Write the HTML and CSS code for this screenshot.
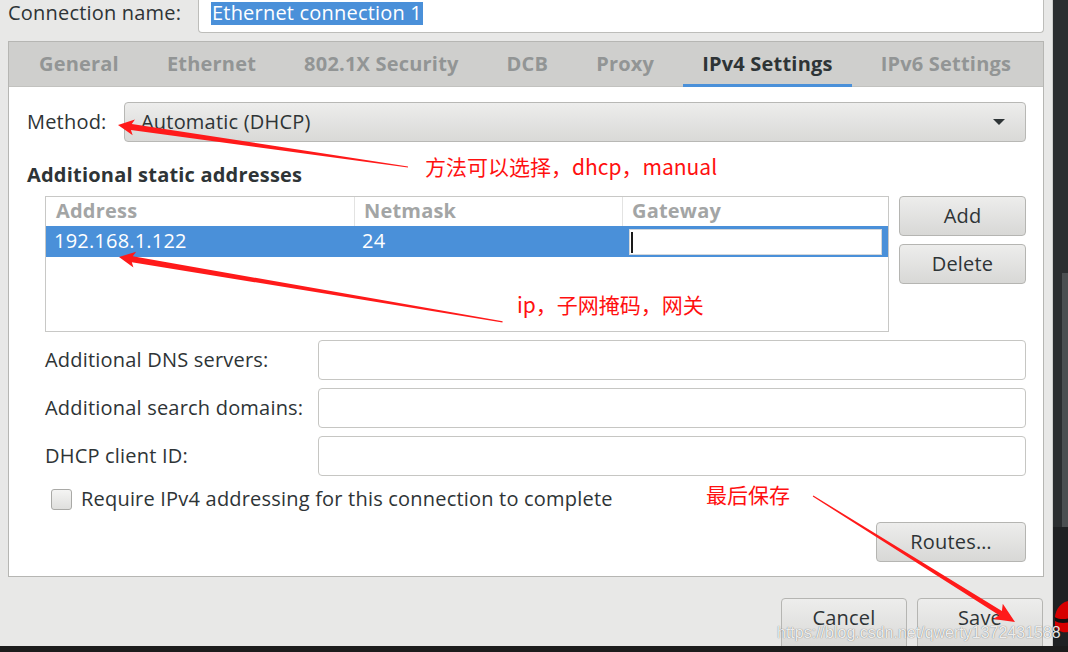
FILE: index.html
```html
<!DOCTYPE html>
<html>
<head>
<meta charset="utf-8">
<title>IPv4 Settings</title>
<link rel="stylesheet" href="styles.css">
</head>
<body>
<div class="screen">
  <div class="main">
    <div class="window">
      <div class="name-row">
        <span class="name-label">Connection name:</span>
        <div class="name-entry"><span class="sel">Ethernet connection 1</span></div>
      </div>
      <div class="notebook">
        <div class="tabs">
          <div class="tab">General</div>
          <div class="tab">Ethernet</div>
          <div class="tab">802.1X Security</div>
          <div class="tab">DCB</div>
          <div class="tab">Proxy</div>
          <div class="tab active">IPv4 Settings</div>
          <div class="tab">IPv6 Settings</div>
        </div>
        <div class="page">
          <div class="method-row">
            <span class="method-lbl">Method:</span>
            <div class="combo"><span>Automatic (DHCP)</span><span class="combo-arrow"></span></div>
          </div>
          <div class="section-title">Additional static addresses</div>
          <div class="addr-row">
            <div class="addr-table">
              <div class="thead">
                <div class="th c1">Address</div>
                <div class="th c2">Netmask</div>
                <div class="th c3">Gateway</div>
              </div>
              <div class="trow selected">
                <div class="td c1">192.168.1.122</div>
                <div class="td c2">24</div>
                <div class="td c3"><div class="cell-entry"><span class="cursor"></span></div></div>
              </div>
            </div>
            <div class="side-buttons">
              <button class="btn">Add</button>
              <button class="btn">Delete</button>
            </div>
          </div>
          <div class="fields">
            <div class="field-row"><span class="field-lbl">Additional DNS servers:</span><div class="entry"></div></div>
            <div class="field-row"><span class="field-lbl">Additional search domains:</span><div class="entry"></div></div>
            <div class="field-row"><span class="field-lbl">DHCP client ID:</span><div class="entry"></div></div>
          </div>
          <div class="check-row"><span class="checkbox"></span><span>Require IPv4 addressing for this connection to complete</span></div>
          <div class="routes-row"><button class="btn routes">Routes…</button></div>
        </div>
      </div>
      <div class="actions">
        <button class="btn action">Cancel</button>
        <button class="btn action">Save</button>
      </div>
    </div>
    <div class="desktop">
      <div class="desk-top"><div class="desk-panel"></div></div>
      <div class="desk-bottom">
        <svg class="redhat" width="15" height="34" viewBox="0 0 15 34">
          <path d="M2 22 C1 12 6 3 15 1 L15 32 C9 33 4 31 2 26 Z" fill="#d60000"/>
          <path d="M1.5 17 C6 19.5 11 19.5 15 18.5 L15 22.5 C10 23.5 5 23 2 21 Z" fill="#111"/>
        </svg>
      </div>
    </div>
  </div>
  <div class="taskbar"></div>

  <svg class="marks" width="1068" height="652" viewBox="0 0 1068 652">
    <g fill="#ff1a1a">
      <g transform="translate(118 125) rotate(8.24)">
        <polygon points="0,0 16,-8 13.5,-3 293,-0.6 293,0.6 13.5,3 16,8"/>
      </g>
      <g transform="translate(119 257) rotate(9.61)">
        <polygon points="0,0 16,-8 13.5,-3 389,-0.6 389,0.6 13.5,3 16,8"/>
      </g>
      <g transform="translate(1015 622) rotate(211.95)">
        <polygon points="0,0 20,-9 17,-2.5 238,-0.6 238,0.6 17,2.5 20,9"/>
      </g>
    </g>
  </svg>
  <div class="note note1">方法可以选择，dhcp，manual</div>
  <div class="note note2">ip，子网掩码，网关</div>
  <div class="note note3">最后保存</div>
  <div class="watermark">https://blog.csdn.net/qwerty1372431588</div>
</div>
</body>
</html>
```

FILE: styles.css
```css
* { box-sizing: border-box; }
html, body { margin: 0; padding: 0; }
body {
  width: 1068px;
  height: 652px;
  overflow: hidden;
  background: #1c1c1c;
  font-family: "Open Sans", "Noto Sans", sans-serif;
  font-size: 20px;
  letter-spacing: 0.2px;
  color: #2e3436;
}
.screen {
  position: relative;
  width: 1068px;
  height: 652px;
  display: flex;
  flex-direction: column;
}
.main {
  display: flex;
  height: 646px;
  overflow: hidden;
}
.window {
  width: 1053px;
  flex: none;
  background: #e8e8e7;
  border-right: 1px solid #cdcdcb;
  display: flex;
  flex-direction: column;
}
.desktop {
  flex: 1;
  display: flex;
  flex-direction: column;
}
.desk-top {
  height: 527px;
  background: #2b2e30;
  display: flex;
  justify-content: flex-end;
  align-items: flex-end;
}
.desk-panel {
  width: 6px;
  height: 254px;
  background: #4b4f51;
}
.desk-bottom {
  flex: 1;
  background: #1f2123;
  position: relative;
}
.redhat {
  position: absolute;
  left: 0;
  top: 73px;
}
.taskbar {
  height: 6px;
  background: #1c1c1c;
}

/* connection name */
.name-row {
  display: flex;
  height: 33px;
  flex: none;
}
.name-label {
  width: 198px;
  padding-left: 8px;
  line-height: 25px;
}
.name-entry {
  width: 846px;
  height: 33px;
  background: #fff;
  border: 1px solid #bdbdba;
  border-top: 0;
  border-radius: 0 0 4px 4px;
  padding: 2px 0 0 12px;
  display: flex;
  align-items: flex-start;
}
.sel {
  display: block;
  background: #4a90d9;
  color: #fff;
  line-height: 21px;
  height: 23px;
  padding: 0 1px;
}

/* notebook */
.notebook {
  margin: 8px 0 0 8px;
  width: 1036px;
  height: 536px;
  flex: none;
  border: 1px solid #b6b6b3;
  background: #fff;
  display: flex;
  flex-direction: column;
}
.tabs {
  height: 45px;
  flex: none;
  background: #cfcfcd;
  border-bottom: 1px solid #c2c2bf;
  display: flex;
  padding-left: 11px;
  gap: 10px;
}
.tab {
  padding: 0 19px;
  line-height: 43px;
  font-weight: 700;
  color: #929595;
  position: relative;
}
.tab.active { color: #2e3436; }
.tab.active::after {
  content: "";
  position: absolute;
  left: 0;
  right: 0;
  bottom: -1px;
  height: 3px;
  background: #4a90d9;
}
.page {
  flex: 1;
  padding: 15px 17px 0 18px;
  display: flex;
  flex-direction: column;
}

/* method */
.method-row {
  display: flex;
  align-items: center;
  height: 40px;
}
.method-lbl { width: 97px; flex: none; padding-bottom: 2px; }
.combo {
  flex: 1;
  height: 40px;
  border: 1px solid #b8b8b5;
  border-radius: 4px;
  background: linear-gradient(#ededec, #d9d9d7);
  display: flex;
  align-items: center;
  justify-content: space-between;
  padding: 0 20px 2px 16px;
}
.combo-arrow {
  width: 0;
  height: 0;
  margin-top: 2px;
  border-left: 6px solid transparent;
  border-right: 6px solid transparent;
  border-top: 6px solid #2e3436;
}
.section-title {
  margin-top: 22px;
  margin-bottom: 8px;
  line-height: 22px;
  height: 24px;
  font-weight: 700;
}

/* addresses */
.addr-row {
  display: flex;
  gap: 10px;
  padding-left: 18px;
  height: 136px;
}
.addr-table {
  width: 844px;
  height: 136px;
  border: 1px solid #c8c8c6;
  background: #fff;
}
.thead {
  display: flex;
  height: 29px;
}
.th {
  font-weight: 700;
  color: #a3a5a5;
  line-height: 28px;
  padding-left: 10px;
}
.th.c2, .th.c3 {
  border-left: 1px solid #e3e3e2;
  padding-left: 9px;
}
.c1 { width: 308px; }
.c2 { width: 268px; }
.c3 { flex: 1; }
.trow {
  display: flex;
  height: 31px;
}
.trow.selected {
  background: #4a90d9;
  color: #fff;
}
.td {
  line-height: 30px;
  padding-left: 8px;
}
.td.c3 { padding: 3px 0 2px 7px; }
.cell-entry {
  width: 253px;
  height: 26px;
  background: #fff;
  border: 1px solid #d3d7db;
  padding: 2px 0 0 1px;
}
.cursor {
  display: block;
  width: 2px;
  height: 21px;
  background: #1a1a1a;
}
.side-buttons {
  width: 127px;
  display: flex;
  flex-direction: column;
  gap: 8px;
}
.btn {
  font: inherit;
  letter-spacing: inherit;
  color: #2e3436;
  height: 40px;
  border: 1px solid #b5b5b2;
  border-radius: 4px;
  background: linear-gradient(#ededec, #d8d8d6);
  padding: 0 0 2px;
}

/* fields */
.fields {
  margin-top: 8px;
  display: flex;
  flex-direction: column;
  gap: 8px;
  padding-left: 18px;
}
.field-row {
  display: flex;
  align-items: center;
  height: 40px;
}
.field-lbl { width: 273px; flex: none; padding-bottom: 2px; }
.entry {
  flex: 1;
  height: 40px;
  background: #fff;
  border: 1px solid #c6c6c3;
  border-radius: 4px;
}
.check-row {
  margin-top: 10px;
  height: 26px;
  display: flex;
  align-items: center;
  gap: 9px;
  padding-left: 24px;
}
.check-row span:last-child { padding-bottom: 2px; }
.checkbox {
  width: 21px;
  height: 21px;
  border: 1px solid #a9a9a6;
  border-radius: 3px;
  background: linear-gradient(#f4f4f3, #dfdfdd);
}
.routes-row {
  margin-top: 10px;
  display: flex;
  justify-content: flex-end;
}
.routes { width: 150px; }

/* dialog actions */
.actions {
  margin-top: 21px;
  display: flex;
  justify-content: flex-end;
  gap: 10px;
  padding-right: 9px;
}
.action {
  width: 126px;
  height: 52px;
  padding-bottom: 14px;
}

/* annotations */
.marks {
  position: absolute;
  left: 0;
  top: 0;
  pointer-events: none;
}
.note {
  position: absolute;
  color: #ff1010;
  font-family: "Noto Sans CJK SC", "Noto Sans", sans-serif;
  font-size: 21px;
  line-height: 28px;
  letter-spacing: 0;
  white-space: nowrap;
}
.note1 { left: 425px; top: 152px; }
.note2 { left: 517px; top: 290px; }
.note3 { left: 706px; top: 480px; }
.watermark {
  position: absolute;
  left: 777px;
  top: 623px;
  font-family: "Liberation Sans", Arial, sans-serif;
  font-size: 16px;
  line-height: 20px;
  letter-spacing: 0;
  color: rgba(255, 255, 255, 0.9);
  text-shadow: 0 0 1px rgba(0, 0, 0, 0.6);
  white-space: nowrap;
}
```
